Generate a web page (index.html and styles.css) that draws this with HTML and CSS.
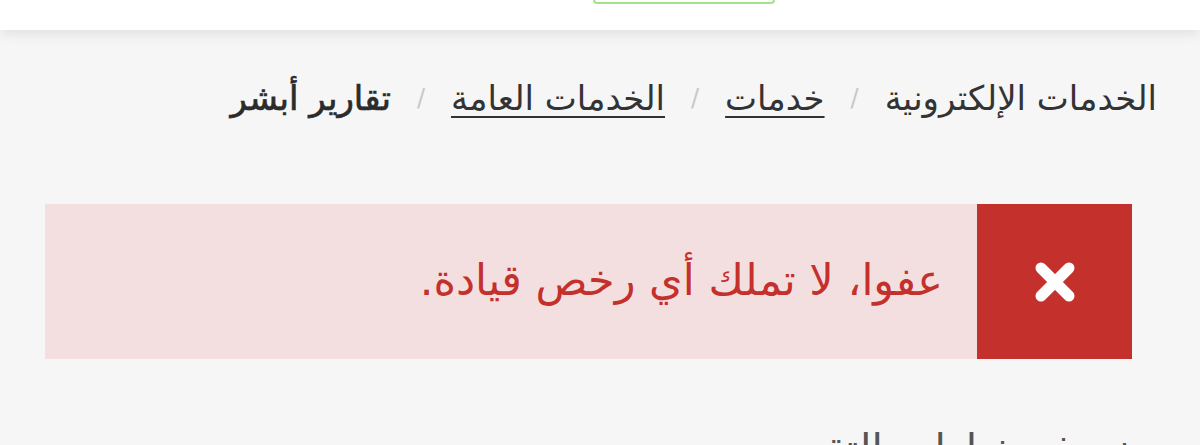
FILE: index.html
```html
<!DOCTYPE html>
<html lang="ar" dir="rtl">
<head>
<meta charset="utf-8">
<title>تقارير أبشر</title>
<link rel="stylesheet" href="styles.css">
</head>
<body>
<header class="topbar">
  <div class="topbar-inner">
    <span class="login-btn"></span>
  </div>
</header>
<main class="page">
  <nav class="breadcrumb">
    <span class="crumb">الخدمات الإلكترونية</span>
    <span class="sep">/</span>
    <a class="crumb link" href="#">خدمات</a>
    <span class="sep">/</span>
    <a class="crumb link" href="#">الخدمات العامة</a>
    <span class="sep">/</span>
    <span class="crumb current">تقارير أبشر</span>
  </nav>
  <div class="alert">
    <div class="alert-icon">
      <svg width="46" height="46" viewBox="0 0 46 46" aria-hidden="true">
        <path d="M9 9 L37 37 M37 9 L9 37" stroke="#fff" stroke-width="11" stroke-linecap="round"/>
      </svg>
    </div>
    <p class="alert-text">عفوا، لا تملك أي رخص قيادة.</p>
  </div>
  <h2 class="section-title">نموذج خيارات التقييم</h2>
</main>
</body>
</html>
```
FILE: styles.css
```css
* { box-sizing: border-box; }
html, body { margin: 0; padding: 0; }
body {
  background: #f6f6f6;
  font-family: "DejaVu Sans", sans-serif;
  color: #333;
  width: 1200px;
  overflow: hidden;
}
.topbar {
  background: #fff;
  height: 30px;
  box-shadow: 0 4px 14px rgba(0,0,0,0.09);
  position: relative;
  z-index: 1;
}
.topbar-inner {
  display: flex;
  justify-content: flex-start;
  padding-right: 425px;
}
.login-btn {
  display: block;
  width: 182px;
  height: 4px;
  border: 2px solid #a5e38a;
  border-top: none;
  border-radius: 0 0 8px 8px;
  background: #fff;
}
.page {
  padding: 0 43px 0 45px;
}
.breadcrumb {
  display: flex;
  align-items: center;
  padding-top: 44px;
  font-size: 34px;
  line-height: 48px;
  white-space: nowrap;
}
.crumb { color: #333; }
.link {
  color: #333;
  text-decoration: underline;
  text-decoration-thickness: 2px;
  text-underline-offset: 6px;
}
.current {
  color: #2b2b2b;
  -webkit-text-stroke: 0.7px #2b2b2b;
}
.sep {
  color: #c8c8c8;
  font-size: 24px;
  padding: 0 26px;
}
.alert {
  display: flex;
  margin: 82px 25px 0 0;
  height: 155px;
  background: #f4dfe0;
}
.alert-icon {
  flex: 0 0 155px;
  background: #c4302c;
  display: flex;
  align-items: center;
  justify-content: center;
}
.alert-text {
  margin: 0;
  padding-right: 34px;
  padding-bottom: 4px;
  align-self: center;
  color: #c4302c;
  font-size: 43px;
}
.section-title {
  margin: 66px 27px 0 0;
  font-size: 41px;
  font-weight: normal;
  color: #555;
}
```
